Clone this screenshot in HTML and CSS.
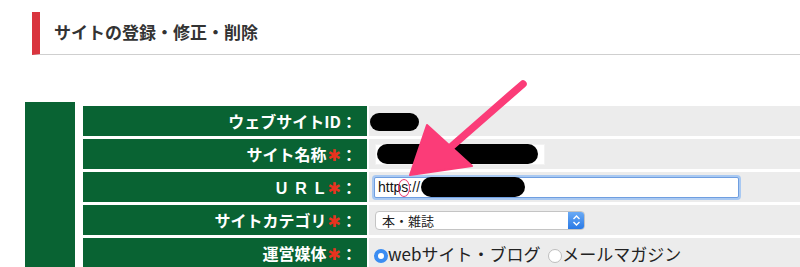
FILE: index.html
```html
<!DOCTYPE html>
<html lang="ja">
<head>
    <meta charset="UTF-8">
    <meta name="viewport" content="width=device-width, initial-scale=1.0">
    <title>サイトの登録・修正・削除</title>
    <link rel="stylesheet" href="styles.css">
</head>
<body>
    <h2 class="page-title">サイトの登録・修正・削除</h2>

    <div class="form-wrap">
        <div class="side"></div>
        <table class="form-table">
            <tr>
                <th>ウェブサイトID：</th>
                <td><span class="mask mask-id"></span></td>
            </tr>
            <tr>
                <th>サイト名称<span class="req">✱</span>：</th>
                <td><span class="text-box short"><span class="mask mask-name"></span></span></td>
            </tr>
            <tr>
                <th><span class="latin"><span class="spaced">UR</span>L</span><span class="req">✱</span>：</th>
                <td>
                    <span class="text-box long focus">
                        <span class="url-text">http<span class="mark">s</span>://</span><span class="mask mask-url"></span>
                    </span>
                </td>
            </tr>
            <tr>
                <th>サイトカテゴリ<span class="req">✱</span>：</th>
                <td>
                    <span class="select-box">
                        <span class="select-text">本・雑誌</span>
                        <span class="stepper">
                            <svg width="9" height="13" viewBox="0 0 9 13"><path d="M1.5 5 L4.5 2 L7.5 5 M1.5 8 L4.5 11 L7.5 8" fill="none" stroke="#fff" stroke-width="1.4"/></svg>
                        </span>
                    </span>
                </td>
            </tr>
            <tr>
                <th>運営媒体<span class="req">✱</span>：</th>
                <td class="radios">
                    <span class="radio checked"></span><span class="radio-label">webサイト・ブログ</span>
                    <span class="radio"></span><span class="radio-label">メールマガジン</span>
                </td>
            </tr>
        </table>
    </div>

    <!-- 説明用の矢印 -->
    <svg class="arrow" width="800" height="267" viewBox="0 0 800 267">
        <line x1="523" y1="84" x2="452" y2="146" stroke="#fb3c78" stroke-width="7.5" stroke-linecap="round"/>
        <polygon points="410,175 427,125 472,166" fill="#fb3c78" stroke="#fb3c78" stroke-width="2" stroke-linejoin="round"/>
    </svg>
</body>
</html>
```

FILE: styles.css
```css
body {
    margin: 0;
    padding: 0;
    overflow: hidden;
    background: #ffffff;
    font-family: "Noto Sans CJK JP", "Noto Sans", sans-serif;
    color: #333;
}

.page-title {
    margin: 12px 0 0 32px;
    height: 42px;
    line-height: 40px;
    padding-left: 14px;
    border-left: 8px solid #d9343e;
    border-bottom: 1px solid #cfcfcf;
    font-size: 17px;
    font-weight: bold;
    color: #333;
}

.form-wrap {
    display: flex;
    align-items: flex-start;
    margin-top: 47px;
    padding-left: 25px;
}

.side {
    width: 50px;
    height: 170px;
    background: #096333;
    flex-shrink: 0;
}

.form-table {
    margin-left: 6px;
    margin-top: 1px;
    width: 730px;
    flex-shrink: 0;
    border-spacing: 2px 3px;
}

.form-table th {
    width: 274px;
    height: 30px;
    padding: 0 10px 0 0;
    background: #096333;
    color: #fff;
    font-size: 16px;
    font-weight: bold;
    text-align: right;
    white-space: nowrap;
}

.form-table td {
    height: 30px;
    padding: 0 0 0 1px;
    background: #ececec;
    vertical-align: middle;
}

.latin {
    font-family: "Liberation Sans", sans-serif;
    margin-right: 2px;
}

.spaced {
    letter-spacing: 8px;
}

.req {
    color: #e8321f;
    font-size: 16px;
    font-family: "DejaVu Sans", sans-serif;
    margin-left: 1px;
}

.mask {
    display: inline-block;
    background: #000;
    border-radius: 10px;
    vertical-align: middle;
}

.mask-id {
    width: 49px;
    height: 18px;
    margin-top: -3px;
}

.mask-name {
    width: 161px;
    height: 20px;
    margin-left: 1px;
}

.mask-url {
    width: 104px;
    height: 20px;
    margin-left: 1px;
}

.text-box {
    display: flex;
    align-items: center;
    box-sizing: border-box;
    height: 21px;
    background: #fff;
    border: 1px solid #d6d6d6;
}

.text-box.short {
    width: 170px;
    margin-left: 5px;
    border-color: #f2f2f2;
}

.text-box.long {
    width: 365px;
    margin-left: 4px;
    padding-left: 3px;
}

.text-box.focus {
    border: 1px solid #6f9ee0;
    box-shadow: 0 0 0 2px #a9c9f2;
    border-radius: 2px;
}

.url-text {
    font-family: "Liberation Sans", sans-serif;
    font-size: 14px;
    color: #111;
}

.mark {
    position: relative;
}

/* 注釈の赤丸 */
.mark::after {
    content: "";
    position: absolute;
    left: -3px;
    top: 0;
    width: 10px;
    height: 16px;
    border: 1.5px solid #e8386e;
    border-radius: 50%;
}

.select-box {
    display: flex;
    align-items: center;
    justify-content: space-between;
    box-sizing: border-box;
    width: 210px;
    height: 19px;
    margin-left: 5px;
    background: #fff;
    border: 1px solid #c4c4c4;
    border-radius: 4px;
    overflow: hidden;
}

.select-text {
    padding-left: 6px;
    font-size: 13px;
    color: #222;
}

.stepper {
    display: flex;
    align-items: center;
    justify-content: center;
    width: 16px;
    height: 100%;
    background: linear-gradient(#6aaaf5, #2a7ae6);
}

.radios {
    font-size: 17px;
    color: #222;
}

.radio {
    display: inline-block;
    box-sizing: border-box;
    width: 14px;
    height: 14px;
    margin-left: 4px;
    border-radius: 50%;
    background: #fff;
    border: 1px solid #bdbdbd;
    vertical-align: -2px;
}

.radio.checked {
    border: 4.5px solid #3b8df2;
    background: #fff;
}

.arrow {
    position: absolute;
    left: 0;
    top: 0;
    pointer-events: none;
}
```
